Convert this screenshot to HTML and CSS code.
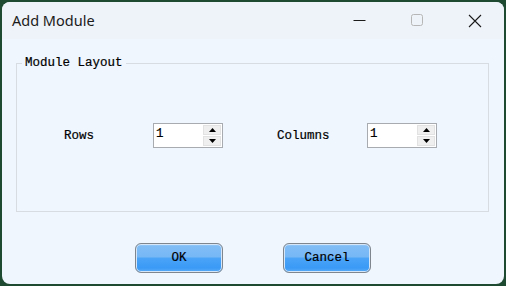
FILE: index.html
```html
<!DOCTYPE html>
<html>
<head>
<meta charset="utf-8">
<link rel="stylesheet" href="styles.css">
</head>
<body>
<div class="window">
  <div class="titlebar">
    <div class="title">Add Module</div>
    <div class="controls">
      <div class="ctl"><svg width="13" height="13" viewBox="0 0 13 13"><line x1="0.5" y1="6.5" x2="12.5" y2="6.5" stroke="#1b1b1b" stroke-width="1"/></svg></div>
      <div class="ctl"><svg width="13" height="13" viewBox="0 0 13 13"><rect x="0.5" y="0.5" width="11" height="11" rx="2" fill="none" stroke="#b6b6b6" stroke-width="1"/></svg></div>
      <div class="ctl"><svg width="14" height="14" viewBox="0 0 14 14"><path d="M1 1 L13 13 M13 1 L1 13" stroke="#1b1b1b" stroke-width="1.1" fill="none"/></svg></div>
    </div>
  </div>
  <div class="content">
    <div class="group">
      <div class="legend">Module Layout</div>
      <div class="fields">
        <div class="label lbl-rows">Rows</div>
        <div class="spin">
          <div class="spin-val">1</div>
          <div class="spin-btns">
            <div class="sbtn"><svg width="7" height="4" viewBox="0 0 7 4"><path d="M0 4 L3.5 0 L7 4 Z" fill="#000"/></svg></div>
            <div class="sbtn"><svg width="7" height="4" viewBox="0 0 7 4"><path d="M0 0 L3.5 4 L7 0 Z" fill="#000"/></svg></div>
          </div>
        </div>
        <div class="label lbl-cols">Columns</div>
        <div class="spin">
          <div class="spin-val">1</div>
          <div class="spin-btns">
            <div class="sbtn"><svg width="7" height="4" viewBox="0 0 7 4"><path d="M0 4 L3.5 0 L7 4 Z" fill="#000"/></svg></div>
            <div class="sbtn"><svg width="7" height="4" viewBox="0 0 7 4"><path d="M0 0 L3.5 4 L7 0 Z" fill="#000"/></svg></div>
          </div>
        </div>
      </div>
    </div>
    <div class="buttons">
      <div class="btn">OK</div>
      <div class="btn">Cancel</div>
    </div>
  </div>
</div>
</body>
</html>
```
FILE: styles.css
```css
html, body {
  margin: 0;
  padding: 0;
}
body {
  background: #1e4a31;
  width: 506px;
  height: 286px;
  overflow: hidden;
}
.window {
  margin: 2px 2px 0 2px;
  width: 502px;
  height: 282px;
  border-radius: 8px;
  overflow: hidden;
  background: #eff6fd;
  display: flex;
  flex-direction: column;
}
.titlebar {
  height: 37px;
  background: #eef2f9;
  display: flex;
  align-items: center;
  justify-content: space-between;
  flex: none;
}
.title {
  font-family: "Noto Sans", sans-serif;
  font-size: 14.5px;
  color: #1b1b1b;
  padding-left: 10px;
  padding-bottom: 1px;
}
.controls {
  display: flex;
  height: 100%;
}
.ctl {
  width: 58px;
  height: 100%;
  display: flex;
  align-items: center;
  justify-content: center;
}
.ctl svg { display: block; }
.content {
  flex: 1;
  display: flex;
  flex-direction: column;
  padding: 24px 15px 0 14px;
}
.group {
  position: relative;
  height: 149px;
  box-sizing: border-box;
  border: 1px solid #d6dce2;
  padding: 59px 0 0 47px;
  flex: none;
}
.legend, .label, .spin-val, .btn {
  font-family: "Liberation Mono", monospace;
  font-size: 12.5px;
  color: #000;
  -webkit-text-stroke: 0.2px #000;
}
.legend {
  position: absolute;
  left: 5px;
  top: -8px;
  padding: 0 3px;
  background: #eff6fd;
  line-height: 15px;
}
.fields {
  display: flex;
  align-items: center;
}
.lbl-rows { width: 89px; }
.lbl-cols { width: 90px; margin-left: 54px; }
.spin {
  width: 70px;
  height: 25px;
  box-sizing: border-box;
  border: 1px solid #a8acb0;
  background: #fff;
  display: flex;
  justify-content: space-between;
}
.spin-val {
  padding: 3px 0 0 2px;
}
.spin-btns {
  width: 18px;
  margin: 1px 1px 1px 0;
  display: flex;
  flex-direction: column;
  gap: 1px;
}
.sbtn {
  flex: 1;
  background: #efefef;
  border: 1px solid #e2e2e2;
  display: flex;
  align-items: center;
  justify-content: center;
}
.sbtn svg { display: block; }
.buttons {
  display: flex;
  justify-content: center;
  gap: 60px;
  margin-top: 31px;
  padding-left: 1px;
}
.btn {
  width: 88px;
  height: 30px;
  box-sizing: border-box;
  border: 1px solid #80868d;
  border-radius: 6px;
  box-shadow: inset 0 0 0 1px #d4e6f8;
  background: linear-gradient(#a3d0fa 0, #80bdf6 8%, #76b7f5 45%, #4aa3f7 52%, #3a9af6 85%, #5aabf7 100%);
  display: flex;
  align-items: center;
  justify-content: center;
}
```
